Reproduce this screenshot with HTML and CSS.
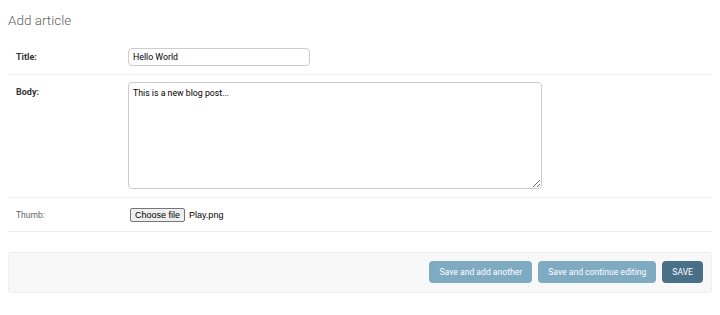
FILE: index.html
```html
<!DOCTYPE html>
<html lang="en">
<head>
  <meta charset="UTF-8" />
  <meta name="viewport" content="width=device-width, initial-scale=1.0"/>
  <title>Add article | Django site admin</title>
  <link rel="stylesheet" href="styles.css">
</head>
<body>
  <div id="content">
    <h1>Add article</h1>
    <form class="article-form">
      <fieldset class="module">
        <div class="form-row">
          <label class="required" for="id_title">Title:</label>
          <input type="text" id="id_title" class="text-field" value="Hello World">
        </div>
        <div class="form-row field-body">
          <label class="required" for="id_body">Body:</label>
          <textarea id="id_body" class="large-text">This is a new blog post...</textarea>
        </div>
        <div class="form-row">
          <label for="id_thumb">Thumb:</label>
          <div class="file-input">
            <button type="button" class="file-btn">Choose file</button>
            <span class="file-name">Play.png</span>
          </div>
        </div>
      </fieldset>

      <div class="submit-row">
        <button type="button" class="button">Save and add another</button>
        <button type="button" class="button">Save and continue editing</button>
        <button type="button" class="button default">SAVE</button>
      </div>
    </form>
  </div>
</body>
</html>
```

FILE: styles.css
```css
:root {
  --body-fg: #333;
  --body-quiet: #666;
  --hairline: #eee;
  --border: #ccc;
  --darkened-bg: #f8f8f8;
  --button-bg: #7eaac2;
  --default-button-bg: #4a7089;
}

* {
  box-sizing: border-box;
}

body {
  margin: 0;
  background: #fff;
  color: var(--body-fg);
  font-family: Roboto, "Liberation Sans", sans-serif;
  font-size: 9px;
}

#content {
  padding: 8px 8px;
}

h1 {
  margin: 2px 0 10px;
  font-size: 13.5px;
  line-height: 20px;
  font-weight: 300;
  color: #5f5f5f;
}

fieldset.module {
  margin: 0;
  padding: 0;
  border: none;
}

.form-row {
  display: flex;
  align-items: flex-start;
  padding: 8px 8px;
  border-bottom: 1px solid var(--hairline);
}

.form-row.field-body {
  padding-top: 7px;
}

.form-row label {
  width: 112px;
  flex: none;
  padding-top: 4px;
  line-height: 11px;
  color: var(--body-quiet);
  font-size: 8.5px;
}

.form-row label.required {
  color: var(--body-fg);
  font-weight: 700;
  font-size: 9px;
}

.form-row.field-body label {
  padding-top: 5px;
}

.text-field,
.large-text {
  font-family: Roboto, "Liberation Sans", sans-serif;
  font-size: 8.75px;
  color: #000;
  border: 1px solid var(--border);
  border-radius: 4px;
  background: #fff;
  padding: 0 4px;
  margin: 0;
}

.text-field {
  width: 182px;
  height: 18px;
}

.large-text {
  display: block;
  width: 414px;
  height: 107px;
  padding: 5px 4px;
  line-height: 11px;
  resize: vertical;
}

.file-input {
  display: flex;
  align-items: center;
  gap: 4px;
  height: 17px;
  padding: 0 2px;
}

.file-btn {
  font-family: "Liberation Sans", Roboto, sans-serif;
  font-size: 9px;
  height: 14px;
  padding: 0 4px;
  line-height: 12px;
  color: #000;
  background: #efefef;
  border: 1px solid #767676;
  border-radius: 2px;
}

.file-name {
  font-family: "Liberation Sans", Roboto, sans-serif;
  font-size: 9px;
  color: #000;
}

.submit-row {
  display: flex;
  justify-content: flex-end;
  gap: 6px;
  margin-top: 20px;
  padding: 8px 8px 9px;
  background: var(--darkened-bg);
  border: 1px solid var(--hairline);
  border-radius: 3px;
}

.button {
  height: 22px;
  padding: 0 10px;
  font-family: Roboto, "Liberation Sans", sans-serif;
  font-size: 8.6px;
  color: #fff;
  background: var(--button-bg);
  border: none;
  border-radius: 4px;
  cursor: pointer;
}

.button.default {
  background: var(--default-button-bg);
}
```
